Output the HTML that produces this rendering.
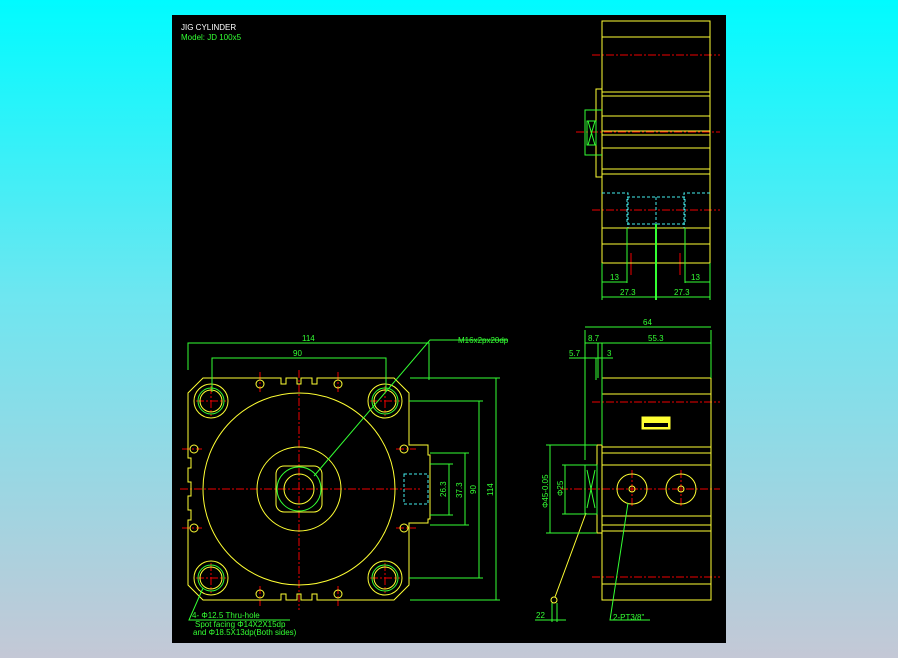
<!DOCTYPE html>
<html><head><meta charset="utf-8"><style>
html,body{margin:0;padding:0;width:898px;height:658px;overflow:hidden}
body{background:linear-gradient(#00fbff 0%,#6ee6f0 45%,#c4c8d6 100%)}
svg{position:absolute;left:0;top:0}
text{font-family:"Liberation Sans",sans-serif;font-size:8px}
</style></head><body>
<svg width="898" height="658" viewBox="0 0 898 658">
<rect x="172" y="15" width="554" height="628" fill="#000"/>
<text x="181" y="30" fill="#fff">JIG CYLINDER</text>
<text x="181" y="40" fill="#3f3">Model: JD 100x5</text>

<!-- FRONT VIEW -->
<g fill="none" stroke-width="1">
<g stroke="#e00" stroke-dasharray="8,2,2,2">
<line x1="299" y1="370" x2="299" y2="610"/><line x1="180" y1="489" x2="420" y2="489"/>
<line x1="196" y1="401" x2="226" y2="401"/><line x1="211" y1="386" x2="211" y2="416"/>
<line x1="370" y1="401" x2="400" y2="401"/><line x1="385" y1="386" x2="385" y2="416"/>
<line x1="196" y1="578" x2="226" y2="578"/><line x1="211" y1="563" x2="211" y2="593"/>
<line x1="370" y1="578" x2="400" y2="578"/><line x1="385" y1="563" x2="385" y2="593"/>
<line x1="260" y1="372" x2="260" y2="392"/><line x1="338" y1="372" x2="338" y2="392"/>
<line x1="260" y1="586" x2="260" y2="606"/><line x1="338" y1="586" x2="338" y2="606"/>
<line x1="182" y1="449" x2="202" y2="449"/><line x1="182" y1="528" x2="202" y2="528"/>
<line x1="396" y1="449" x2="416" y2="449"/><line x1="396" y1="528" x2="416" y2="528"/>
</g>
<g stroke="#ff3">
<path d="M203 378 H281 V384 H286 V378 H297 V384 H301 V378 H312 V384 H317 V378 H394 L409 393 V445 H428 V455 L430 455 V519 H428 V523 H409 V585 L394 600 H317 V594 H312 V600 H301 V594 H297 V600 H286 V594 H281 V600 H203 L188 585 V520 H191 V510 H188 V496 H191 V482 H188 V468 H191 V458 H188 V393 Z"/>
<circle cx="299" cy="489" r="96"/><circle cx="299" cy="489" r="42"/>
<rect x="276" y="466" width="46" height="46" rx="8"/>
<circle cx="299" cy="489" r="15"/>
<circle cx="211" cy="401" r="17"/><circle cx="385" cy="401" r="17"/><circle cx="211" cy="578" r="17"/><circle cx="385" cy="578" r="17"/>
<circle cx="211" cy="401" r="11"/><circle cx="385" cy="401" r="11"/><circle cx="211" cy="578" r="11"/><circle cx="385" cy="578" r="11"/>
<circle cx="260" cy="384" r="4"/><circle cx="338" cy="384" r="4"/><circle cx="260" cy="594" r="4"/><circle cx="338" cy="594" r="4"/>
<circle cx="194" cy="449" r="4"/><circle cx="194" cy="528" r="4"/><circle cx="404" cy="449" r="4"/><circle cx="404" cy="528" r="4"/>
</g>
<g stroke="#3f3">
<circle cx="299" cy="489" r="22"/>
<circle cx="211" cy="401" r="13"/><circle cx="385" cy="401" r="13"/><circle cx="211" cy="578" r="13"/><circle cx="385" cy="578" r="13"/>
<path d="M188 370 V343 H429 V380 M188 343 V360"/>
<path d="M212 392 V358 H386 V392"/>
<path d="M410 378 H500 M496 378 V600 M410 600 H500"/>
<path d="M409 401 H483 M479 401 V578 M409 578 H483"/>
<path d="M430 453 H469 M465 453 V525 M430 525 H469"/>
<path d="M430 464 H453 M449 464 V515 M430 515 H453"/>
<path d="M314 476 L430 340 H508"/>
<path d="M203 588 L189 620 H290"/>
</g>
<rect x="404" y="474" width="24" height="30" stroke="#4ee" stroke-dasharray="3,2"/>
</g>
<g fill="#3f3">
<text x="302" y="341">114</text><text x="293" y="356">90</text>
<text x="458" y="343" font-size="7">M16x2px20dp</text>
<text transform="translate(446,497) rotate(-90)">26.3</text>
<text transform="translate(462,498) rotate(-90)">37.3</text>
<text transform="translate(476,494) rotate(-90)">90</text>
<text transform="translate(493,496) rotate(-90)">114</text>
<text x="192" y="618" font-size="7">4- Φ12.5 Thru-hole</text>
<text x="195" y="627" font-size="7">Spot facing  Φ14X2X15dp</text>
<text x="193" y="635" font-size="7">and Φ18.5X13dp(Both sides)</text>
</g>

<!-- SIDE VIEW -->
<g fill="none">
<g stroke="#e00" stroke-dasharray="8,2,2,2">
<line x1="592" y1="402" x2="720" y2="402"/><line x1="592" y1="577" x2="720" y2="577"/>
<line x1="560" y1="489" x2="720" y2="489"/>
<line x1="632" y1="470" x2="632" y2="508"/><line x1="681" y1="470" x2="681" y2="508"/>
</g>
<g stroke="#ff3">
<rect x="602" y="378" width="109" height="222"/>
<path d="M602 394 H711 M602 447 H711 M602 453 H711 M602 465 H711 M602 516 H711 M602 525 H711 M602 531 H711 M602 584 H711"/>
<path d="M602 445 H597 V533 H602"/>
<circle cx="632" cy="489" r="15"/><circle cx="681" cy="489" r="15"/>
<circle cx="632" cy="489" r="3"/><circle cx="681" cy="489" r="3"/>
<rect x="642" y="417" width="28" height="12" fill="#ff3"/>
<path d="M586 513 L555 597"/><circle cx="554" cy="600" r="3"/>
</g>
<g stroke="#3f3">
<rect x="585" y="465" width="12" height="49"/>
<path d="M587 470 L595 508 M595 470 L587 508"/>
<path d="M585 330 V460 M711 330 V378 M585 327 H711"/>
<path d="M585 343 H711 M598 343 V378 M602 343 V445"/>
<path d="M569 358 H613 M596 358 V380"/>
<path d="M546 445 H597 M550 445 V533 M546 533 H597"/>
<path d="M562 465 H585 M565 465 V514 M562 514 H585"/>
<path d="M552 603 V622 M557 603 V622 M535 620 H566"/>
<path d="M628 503 L610 620 H650"/>
</g>
</g>
<rect x="644" y="423" width="24" height="4" fill="#000"/>
<g fill="#3f3">
<text x="643" y="325">64</text><text x="588" y="341">8.7</text><text x="648" y="341">55.3</text>
<text x="569" y="356">5.7</text><text x="607" y="356">3</text>
<text transform="translate(548,508) rotate(-90)" font-size="7">Φ45-0.05</text>
<text transform="translate(563,496) rotate(-90)">Φ25</text>
<text x="536" y="618">22</text><text x="613" y="620" font-size="7">2-PT3/8"</text>
</g>

<!-- TOP VIEW -->
<g fill="none">
<g stroke="#e00" stroke-dasharray="8,2,2,2">
<line x1="592" y1="55" x2="720" y2="55"/><line x1="576" y1="132" x2="720" y2="132"/><line x1="592" y1="210" x2="720" y2="210"/>
</g>
<path d="M631 253 V275 M680 253 V275" stroke="#e00"/>
<g stroke="#ff3">
<rect x="602" y="21" width="108" height="242"/>
<path d="M602 37 H710 M602 92 H710 M602 96 H710 M602 116 H710 M602 131 H710 M602 135 H710 M602 148 H710 M602 169 H710 M602 174 H710 M602 228 H710 M602 244 H710"/>
<path d="M602 89 H596 V177 H602"/>
</g>
<g stroke="#3f3">
<path d="M602 110 H585 V155 H602"/><rect x="587" y="121" width="9" height="24"/>
<path d="M588 121 L595 145 M595 121 L588 145"/>
<path d="M656 224 V300" stroke-width="2"/>
<path d="M602 263 V300 M710 263 V300 M627 228 V283 M685 228 V283"/>
<path d="M602 282 H627 M685 282 H710 M602 297 H710"/>
</g>
<g stroke="#4ee" stroke-dasharray="3,2">
<path d="M602 193 H628 V228 M710 193 H684 V228"/>
<rect x="627" y="197" width="58" height="27"/>
<path d="M656 197 V224"/>
</g>
</g>
<g fill="#3f3">
<text x="610" y="280">13</text><text x="691" y="280">13</text>
<text x="620" y="295">27.3</text><text x="674" y="295">27.3</text>
</g>
</svg>
</body></html>
